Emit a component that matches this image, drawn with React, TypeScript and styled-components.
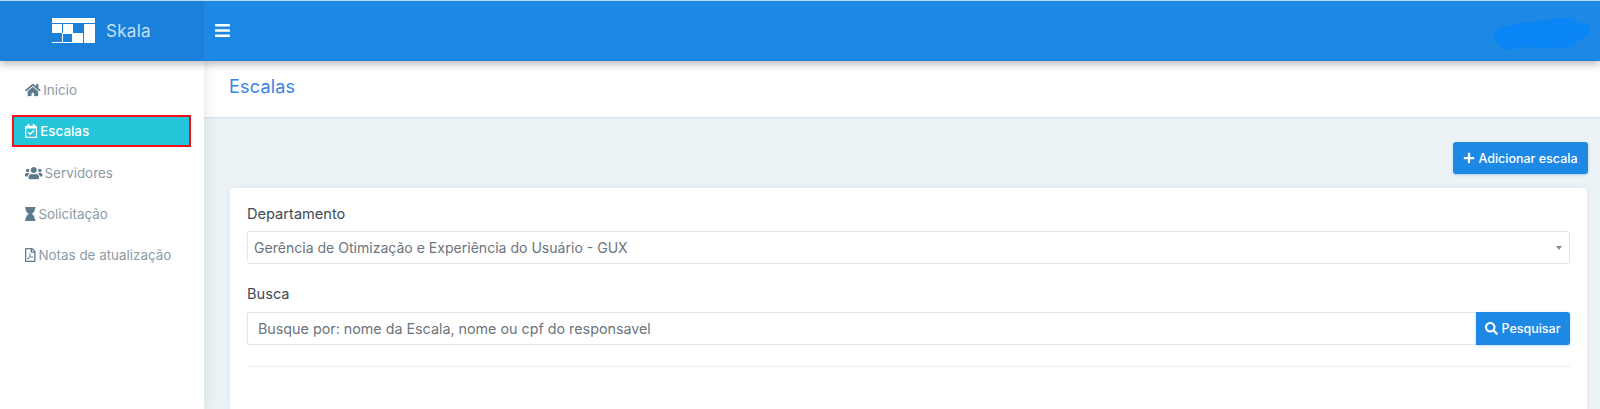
import React from "react";
import styled, { createGlobalStyle } from "styled-components";
import { FaHome, FaRegCalendarCheck, FaUsers, FaHourglass, FaRegFilePdf, FaBars, FaSearch, FaPlus } from "react-icons/fa";

const Global = createGlobalStyle`
  html, body { margin: 0; padding: 0; height: 409px; overflow: hidden; background: #fff; }
  body { font-family: "Inter", "Noto Sans", "Liberation Sans", sans-serif; }
  * { box-sizing: border-box; }
`;

const Page = styled.div`
  width: 1600px;
  height: 409px;
  display: flex;
  flex-direction: column;
  overflow: hidden;
  position: relative;
`;

const Header = styled.header`
  height: 61px;
  flex: none;
  display: flex;
  background: #1e88e5;
  border-top: 1px solid #b9d9f5;
  border-bottom: 1px solid #1a80de;
  box-shadow: 0 3px 8px rgba(0, 0, 0, 0.28);
  position: relative;
  z-index: 3;
`;

const Brand = styled.div`
  width: 204px;
  display: flex;
  align-items: center;
  padding-left: 52px;
  gap: 11px;
  background: #1b80d9;
`;

const BrandName = styled.span`
  color: #c5e0f7;
  font-size: 17px;
  font-weight: 400;
  letter-spacing: 0.3px;
`;

const Burger = styled.div`
  width: 60px;
  display: flex;
  align-items: center;
  padding-left: 10px;
  color: #fff;
  font-size: 17px;
`;

const Spacer = styled.div`
  flex: 1;
`;

const Scribble = styled.svg`
  width: 98px;
  height: 36px;
  margin: 14px 9px 0 0;
  filter: blur(0.6px);
`;

const Body = styled.div`
  flex: 1;
  display: flex;
  min-height: 0;
`;

const Sidebar = styled.nav`
  width: 204px;
  flex: none;
  background: #fff;
  padding-top: 13px;
  display: flex;
  flex-direction: column;
  box-shadow: 1px 0 12px rgba(120, 140, 150, 0.22);
  position: relative;
  z-index: 2;
`;

const NavItem = styled.a<{ $active?: boolean; $gap: number; $iconWidth: number }>`
  height: 32px;
  margin: 0 13px 9.25px 12px;
  padding-left: 11px;
  display: flex;
  align-items: center;
  gap: ${(p) => p.$gap}px;
  font-size: 13.4px;
  font-weight: ${(p) => (p.$active ? 500 : 400)};
  color: ${(p) => (p.$active ? "#fff" : "#8a9ba6")};
  background: ${(p) => (p.$active ? "#26c6da" : "transparent")};
  border: ${(p) => (p.$active ? "2px solid #f40f1c" : "2px solid transparent")};
  svg {
    height: 14px;
    width: ${(p) => p.$iconWidth}px;
    flex: none;
    color: ${(p) => (p.$active ? "#fff" : "#5e7b8e")};
  }
`;

const Main = styled.main`
  flex: 1;
  display: flex;
  flex-direction: column;
  background: #ecf3f6;
  min-width: 0;
`;

const TitleBar = styled.div`
  height: 56px;
  flex: none;
  background: #fff;
  display: flex;
  align-items: center;
  padding: 0 0 5px 25px;
  box-shadow: 0 1px 2px rgba(120, 140, 150, 0.18);
`;

const Title = styled.h1`
  margin: 0;
  font-size: 18px;
  font-weight: 400;
  color: #3b82e6;
  letter-spacing: 0.2px;
`;

const Actions = styled.div`
  display: flex;
  justify-content: flex-end;
  padding: 25px 12px 14px 0;
`;

const PrimaryButton = styled.button`
  height: 32px;
  width: 135px;
  border: none;
  border-radius: 3px;
  background: #1e88e5;
  color: #fff;
  font-family: inherit;
  font-size: 12.5px;
  font-weight: 500;
  display: flex;
  align-items: center;
  justify-content: center;
  gap: 3px;
  box-shadow: 0 1px 3px rgba(30, 136, 229, 0.3);
  svg {
    font-size: 12px;
  }
`;

const Card = styled.section`
  margin: 0 13px 0 26px;
  flex: 1;
  background: #fff;
  border-radius: 3px 3px 0 0;
  padding: 17px 17px 0;
  box-shadow: 0 0 6px rgba(120, 140, 150, 0.12);
`;

const Label = styled.label`
  display: block;
  height: 26px;
  line-height: 18px;
  font-size: 14.6px;
  color: #3e4a56;
`;

const Select = styled.div`
  height: 33px;
  border: 1px solid #e2e6e9;
  border-radius: 3px;
  display: flex;
  align-items: center;
  justify-content: space-between;
  padding: 0 7px 0 6px;
  font-size: 14.05px;
  color: #6c757d;
  margin-bottom: 21px;
`;

const Caret = styled.span`
  width: 0;
  height: 0;
  border-left: 3px solid transparent;
  border-right: 3px solid transparent;
  border-top: 4px solid #888;
`;

const SearchRow = styled.div`
  display: flex;
  height: 33px;
  margin-top: 1px;
`;

const SearchInput = styled.div`
  flex: 1;
  border: 1px solid #e2e6e9;
  border-right: none;
  border-radius: 3px 0 0 3px;
  display: flex;
  align-items: center;
  padding-left: 10px;
  font-size: 14.3px;
  color: #6c757d;
`;

const SearchButton = styled.button`
  width: 94px;
  border: none;
  border-radius: 0 3px 3px 0;
  background: #1e88e5;
  color: #fff;
  font-family: inherit;
  font-size: 12.5px;
  font-weight: 500;
  display: flex;
  align-items: center;
  justify-content: center;
  gap: 3px;
  box-shadow: 0 1px 3px rgba(30, 136, 229, 0.3);
  svg {
    font-size: 13px;
  }
`;

const Divider = styled.hr`
  border: none;
  border-top: 1px solid #ececec;
  margin: 21px 0 0;
`;

const Logo = () => (
  <svg width="43" height="25" viewBox="0 0 43 25" aria-hidden="true">
    <g fill="#fff">
      <rect x="0" y="0" width="43" height="5" />
      <rect x="0" y="6" width="10" height="9" />
      <rect x="11" y="6" width="10" height="9" />
      <rect x="32" y="6" width="11" height="9" />
      <rect x="21" y="15" width="10" height="10" />
      <rect x="32" y="15" width="11" height="10" />
      <rect x="0" y="24" width="21" height="1" />
      <rect x="10" y="15" width="1" height="10" />
      <rect x="20" y="15" width="1" height="10" />
      <rect x="10" y="15" width="11" height="1" />
    </g>
  </svg>
);

const items = [
  { label: "Inicio", icon: <FaHome />, iconWidth: 15.75, gap: 2.5 },
  { label: "Escalas", icon: <FaRegCalendarCheck />, iconWidth: 12.25, gap: 3, active: true },
  { label: "Servidores", icon: <FaUsers />, iconWidth: 17.5, gap: 2 },
  { label: "Solicitação", icon: <FaHourglass />, iconWidth: 10.5, gap: 3 },
  { label: "Notas de atualização", icon: <FaRegFilePdf />, iconWidth: 10.5, gap: 3 },
];

export default function App() {
  return (
    <Page>
      <Global />
      <Header>
        <Brand>
          <Logo />
          <BrandName>Skala</BrandName>
        </Brand>
        <Burger>
          <FaBars />
        </Burger>
        <Spacer />
        <Scribble viewBox="0 0 98 36" aria-hidden="true">
          <path
            d="M0 22 L4 14 C14 9 35 8 50 5 L66 3 L82 4 L83 10 L90 7 C98 8 99 16 95 20 L88 24 L82 28 L82 32 L50 33 L22 32 C21 36 10 36 8 31 L3 28 L4 24 Z"
            fill="#0a85f5"
          />
        </Scribble>
      </Header>
      <Body>
        <Sidebar>
          {items.map((i) => (
            <NavItem key={i.label} $active={i.active} $gap={i.gap} $iconWidth={i.iconWidth}>
              {i.icon}
              {i.label}
            </NavItem>
          ))}
        </Sidebar>
        <Main>
          <TitleBar>
            <Title>Escalas</Title>
          </TitleBar>
          <Actions>
            <PrimaryButton>
              <FaPlus />
              Adicionar escala
            </PrimaryButton>
          </Actions>
          <Card>
            <Label>Departamento</Label>
            <Select>
              Gerência de Otimização e Experiência do Usuário - GUX
              <Caret />
            </Select>
            <Label>Busca</Label>
            <SearchRow>
              <SearchInput>Busque por: nome da Escala, nome ou cpf do responsavel</SearchInput>
              <SearchButton>
                <FaSearch />
                Pesquisar
              </SearchButton>
            </SearchRow>
            <Divider />
          </Card>
        </Main>
      </Body>
    </Page>
  );
}
